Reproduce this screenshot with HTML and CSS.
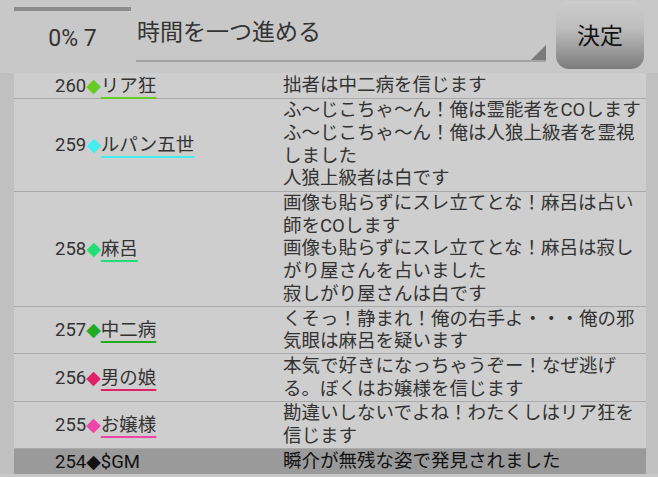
FILE: index.html
```html
<!DOCTYPE html>
<html lang="ja">

<head>
    <meta charset="UTF-8">
    <title>ログ</title>
    <link rel="stylesheet" href="styles.css">
</head>

<body>
    <div class="top">
        <div class="timer">
            <div class="timer_bar"></div>
            <div class="timer_label">0% 7</div>
        </div>
        <div class="select">
            <span class="select_text">時間を一つ進める</span>
            <span class="select_arrow"></span>
        </div>
        <div class="btn">決定</div>
    </div>
    <div class="log_wrap">
        <div class="log">
            <div class="log_row">
                <div class="log_who">260<span class="mark p_lime">◆</span><span class="name p_lime">リア狂</span></div>
                <div class="log_msg">拙者は中二病を信じます</div>
            </div>
            <div class="log_row">
                <div class="log_who">259<span class="mark p_cyan">◆</span><span class="name p_cyan">ルパン五世</span></div>
                <div class="log_msg">ふ～じこちゃ～ん！俺は霊能者をCOします<br>ふ～じこちゃ～ん！俺は人狼上級者を霊視しました<br>人狼上級者は白です</div>
            </div>
            <div class="log_row">
                <div class="log_who">258<span class="mark p_mint">◆</span><span class="name p_mint">麻呂</span></div>
                <div class="log_msg">画像も貼らずにスレ立てとな！麻呂は占い師をCOします<br>画像も貼らずにスレ立てとな！麻呂は寂しがり屋さんを占いました<br>寂しがり屋さんは白です</div>
            </div>
            <div class="log_row">
                <div class="log_who">257<span class="mark p_green">◆</span><span class="name p_green">中二病</span></div>
                <div class="log_msg">くそっ！静まれ！俺の右手よ・・・俺の邪気眼は麻呂を疑います</div>
            </div>
            <div class="log_row">
                <div class="log_who">256<span class="mark p_red">◆</span><span class="name p_red">男の娘</span></div>
                <div class="log_msg">本気で好きになっちゃうぞー！なぜ逃げる。ぼくはお嬢様を信じます</div>
            </div>
            <div class="log_row">
                <div class="log_who">255<span class="mark p_pink">◆</span><span class="name p_pink">お嬢様</span></div>
                <div class="log_msg">勘違いしないでよね！わたくしはリア狂を信じます</div>
            </div>
            <div class="log_row log_row_gm">
                <div class="log_who">254<span class="mark">◆</span>$GM</div>
                <div class="log_msg">瞬介が無残な姿で発見されました</div>
            </div>
        </div>
    </div>
</body>

</html>
```

FILE: styles.css
```css
body {
    margin: 0;
    background-color: #c8c8c8;
    font-family: "Roboto", "Noto Sans CJK JP", sans-serif;
    color: #333;
    overflow: hidden;
}

/* 上のバー */
.top {
    display: flex;
    height: 73px;
    padding-left: 14px;
}

.timer {
    width: 117px;
    padding-top: 7px;
    text-align: center;
}

.timer_bar {
    height: 4px;
    background-color: #8c8c8c;
}

.timer_label {
    margin-top: 16px;
    font-size: 23px;
    line-height: 23px;
}

.select {
    display: flex;
    justify-content: space-between;
    width: 410px;
    height: 60px;
    margin-left: 5px;
    border-bottom: 2px solid #a2a2a2;
}

.select_text {
    padding: 21px 0 0 1px;
    font-size: 23px;
    line-height: 23px;
}

.select_arrow {
    align-self: flex-end;
    width: 0;
    height: 0;
    border-left: 15px solid transparent;
    border-bottom: 15px solid #7a7a7a;
}

.btn {
    width: 88px;
    height: 68px;
    margin: 1px 0 0 10px;
    border-radius: 13px;
    background: linear-gradient(to bottom, #cccccc 0%, #bebebe 40%, #7c7c7c 100%);
    color: #111;
    font-size: 23px;
    line-height: 71px;
    text-align: center;
}

/* ログ */
.log_wrap {
    padding: 0 12px 0 14px;
    background-color: #c0c0c0;
}

.log {
    background-color: #cecece;
}

.log_row {
    display: flex;
    align-items: center;
    padding: 0.5px 0;
    border-bottom: 1px solid #aaaaaa;
    font-size: 18.5px;
    line-height: 22.7px;
}

.log_row_gm {
    background-color: #9a9a9a;
    border-bottom: 0;
    color: #111;
}

.log_who {
    width: 228px;
    padding-left: 41px;
    flex-shrink: 0;
}

.log_msg {
    width: 362px;
}

.mark {
    font-family: "DejaVu Sans", sans-serif;
    font-size: 19px;
}

.name {
    text-decoration: underline;
    text-decoration-thickness: 2px;
    text-underline-offset: 5px;
}

.p_lime { color: #66cc22; }
.p_cyan { color: #44eeee; }
.p_mint { color: #22dd77; }
.p_green { color: #22aa22; }
.p_red { color: #dd2266; }
.p_pink { color: #ee44aa; }

.name.p_lime, .name.p_cyan, .name.p_mint,
.name.p_green, .name.p_red, .name.p_pink {
    color: #333;
}

.p_lime.name { text-decoration-color: #66cc22; }
.p_cyan.name { text-decoration-color: #44eeee; }
.p_mint.name { text-decoration-color: #22dd77; }
.p_green.name { text-decoration-color: #22aa22; }
.p_red.name { text-decoration-color: #dd2266; }
.p_pink.name { text-decoration-color: #ee44aa; }
```
